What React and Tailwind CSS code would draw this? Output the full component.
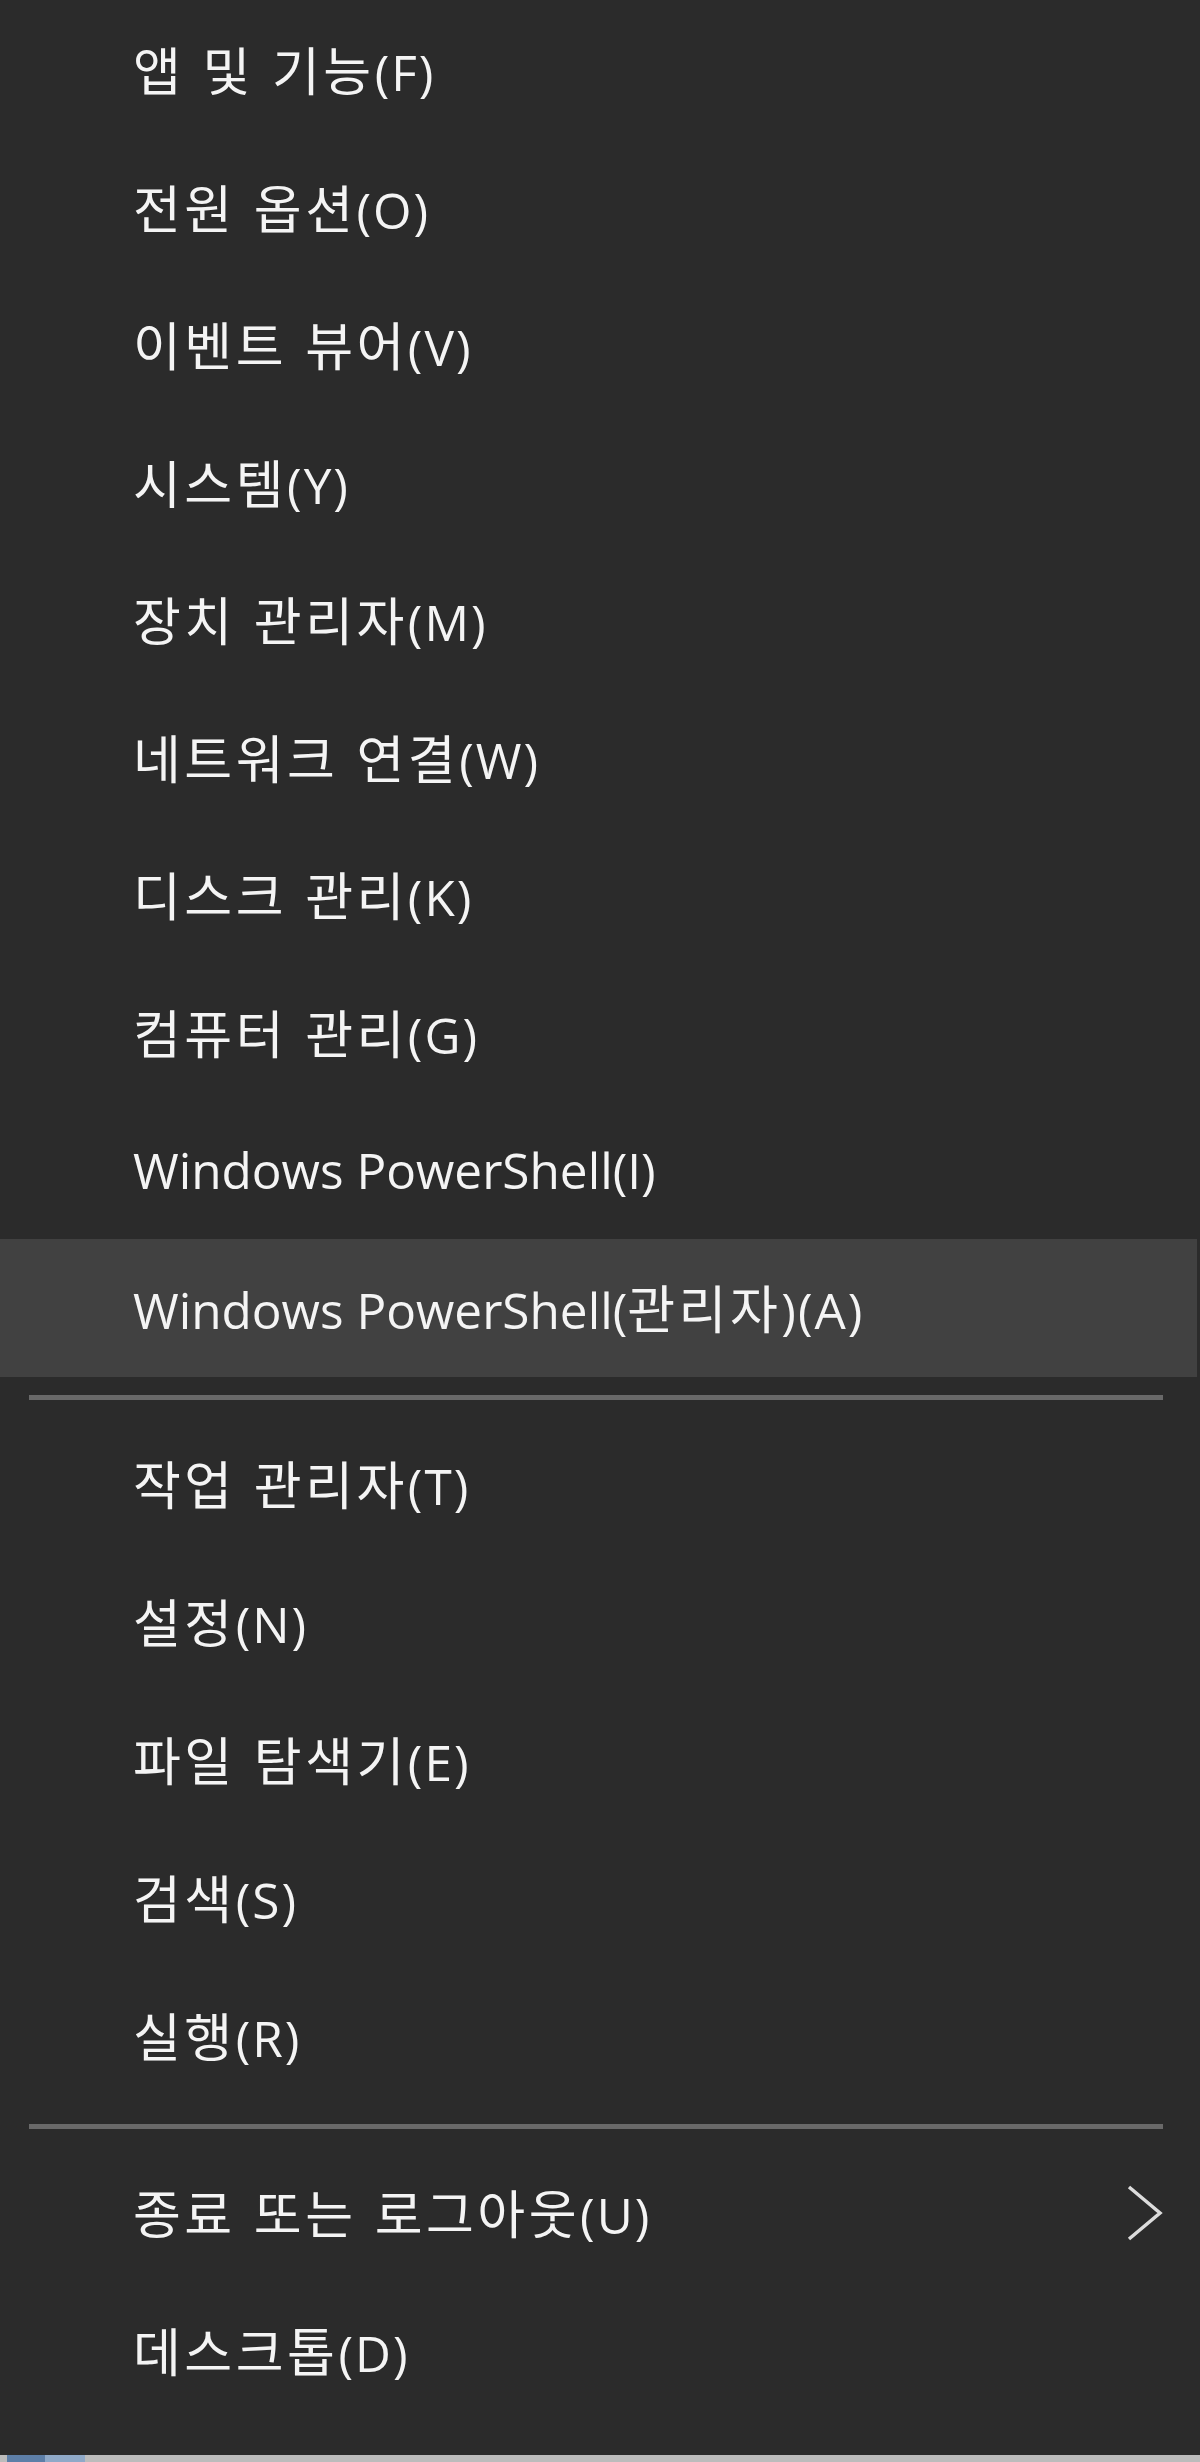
const GROUP_A = [
  '앱 및 기능(F)',
  '전원 옵션(O)',
  '이벤트 뷰어(V)',
  '시스템(Y)',
  '장치 관리자(M)',
  '네트워크 연결(W)',
  '디스크 관리(K)',
  '컴퓨터 관리(G)',
  'Windows PowerShell(I)',
  'Windows PowerShell(관리자)(A)',
]

const GROUP_B = ['작업 관리자(T)', '설정(N)', '파일 탐색기(E)', '검색(S)', '실행(R)']

// hangul runs (with the spaces between them) get the CJK face, the rest a latin face
const HANGUL = /([\uAC00-\uD7A3]+(?:\s+[\uAC00-\uD7A3]+)*)/

function Label({ text }) {
  const parts = text.split(HANGUL).filter(Boolean)
  return (
    <span className="whitespace-nowrap">
      {parts.map((p, i) =>
        HANGUL.test(p) ? (
          <span
            key={i}
            className="text-[52px] tracking-[3.5px] [word-spacing:3px]"
            style={{ fontFamily: '"Noto Sans CJK KR", sans-serif' }}
          >
            {p}
          </span>
        ) : (
          <span
            key={i}
            className={`text-[49.5px] ${p.length <= 4 ? 'tracking-[2px]' : ''}`}
            style={{ fontFamily: '"Open Sans", "Noto Sans", sans-serif' }}
          >
            {p}
          </span>
        )
      )}
    </span>
  )
}

function Item({ label, active, tall, children }) {
  return (
    <div
      className={`flex items-center pl-[133px] pr-[37px] ${tall ? 'h-[138px]' : 'h-[137.5px]'} ${active ? 'bg-[#414141] mr-[3px]' : ''}`}
    >
      <Label text={label} />
      {children}
    </div>
  )
}

function Separator() {
  return (
    <div className="pt-[18px] pb-[16px] pl-[29px] pr-[37px]">
      <div className="h-[5px] bg-[#696969]" />
    </div>
  )
}

export default function App() {
  return (
    <div className="w-[1200px] h-[2462px] bg-[#2b2b2b] text-[#f4f4f4] leading-none flex flex-col overflow-hidden">
      <div className="pt-[1.5px]">
        {GROUP_A.map((label, i) => (
          <Item key={label} label={label} active={i === GROUP_A.length - 1} />
        ))}
      </div>

      <Separator />

      <div>
        {GROUP_B.map(label => (
          <Item key={label} label={label} tall />
        ))}
      </div>

      <Separator />

      <div>
        <Item label="종료 또는 로그아웃(U)">
          <svg className="ml-auto" width="36" height="56" viewBox="0 0 36 56" fill="none">
            <polyline points="2,2 33,28 2,54" stroke="#dcdcdc" strokeWidth="3.5" />
          </svg>
        </Item>
        <Item label="데스크톱(D)" />
      </div>

      <div className="flex-1" />

      {/* taskbar edge */}
      <div className="h-[7px] bg-[#bcbcbc] flex">
        <div className="w-[7px]" />
        <div className="w-[38px] bg-[#5d7fa8]" />
        <div className="w-[40px] bg-[#8fa9c8]" />
      </div>
    </div>
  )
}
